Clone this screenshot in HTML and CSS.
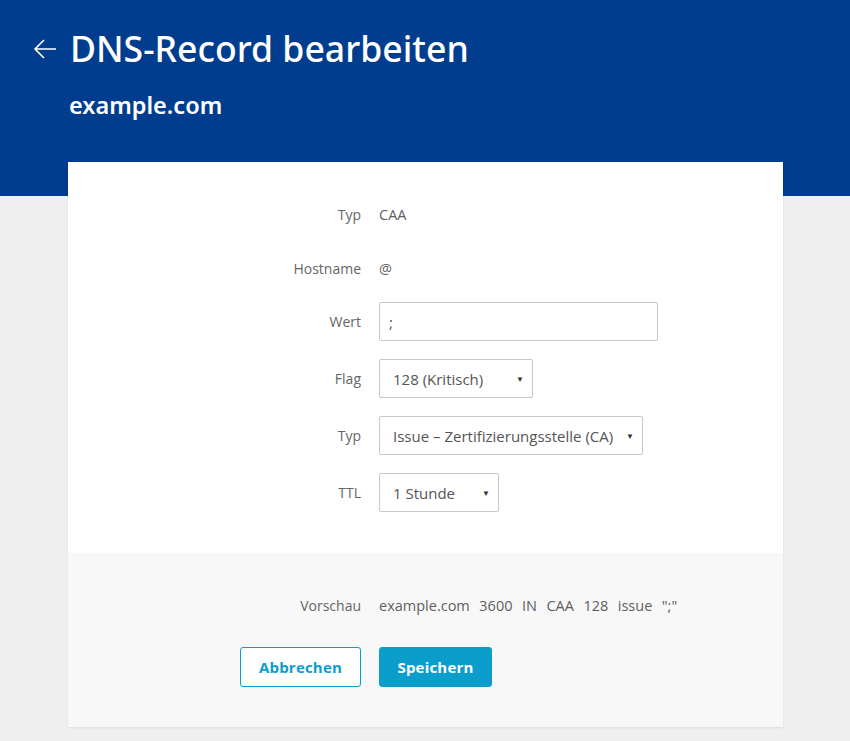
FILE: index.html
```html
<!DOCTYPE html>
<html lang="de">
<head>
<meta charset="utf-8">
<title>DNS-Record bearbeiten</title>
<link rel="stylesheet" href="styles.css">
</head>
<body>
<header class="header">
  <div class="title-row">
    <svg class="back" width="24" height="24" viewBox="0 0 24 24" aria-hidden="true">
      <path d="M23 12H2M11 3l-9 9 9 9" fill="none" stroke="#fff" stroke-width="1.6"/>
    </svg>
    <h1 class="title">DNS-Record bearbeiten</h1>
  </div>
  <div class="subtitle">example.com</div>
</header>
<main class="card">
  <section class="form">
    <div class="row text-row"><span class="label">Typ</span><span class="value">CAA</span></div>
    <div class="row text-row"><span class="label">Hostname</span><span class="value">@</span></div>
    <div class="row ctrl-row"><span class="label">Wert</span><div class="input">;</div></div>
    <div class="row ctrl-row"><span class="label">Flag</span><div class="select w-flag"><span>128 (Kritisch)</span><span class="caret">▼</span></div></div>
    <div class="row ctrl-row"><span class="label">Typ</span><div class="select w-typ"><span>Issue – Zertifizierungsstelle (CA)</span><span class="caret">▼</span></div></div>
    <div class="row ctrl-row"><span class="label">TTL</span><div class="select w-ttl"><span>1 Stunde</span><span class="caret">▼</span></div></div>
  </section>
  <section class="footer">
    <div class="row preview"><span class="label">Vorschau</span><span class="value tokens"><span>example.com</span><span>3600</span><span>IN</span><span>CAA</span><span>128</span><span>issue</span><span>";"</span></span></div>
    <div class="row buttons">
      <div class="label-cell"><button class="btn btn-outline">Abbrechen</button></div>
      <button class="btn btn-primary">Speichern</button>
    </div>
  </section>
</main>
</body>
</html>
```
FILE: styles.css
```css
* { box-sizing: border-box; }
html, body { margin: 0; padding: 0; }
body {
  background: #efefef;
  font-family: "Open Sans", "Noto Sans", sans-serif;
  font-size: 14px;
  color: #5b5b5b;
  height: 741px;
  overflow: hidden;
}
.header {
  background: #003d8f;
  height: 196px;
  padding: 26px 0 0 33px;
  color: #fff;
}
.title-row {
  display: flex;
  align-items: center;
  gap: 13px;
}
.back { display: block; margin-top: 2px; }
.title {
  margin: 0;
  font-family: "Noto Sans", sans-serif;
  font-weight: 500;
  font-size: 35.6px;
  line-height: 44px;
  letter-spacing: 0;
}
.subtitle {
  margin: 20px 0 0 36px;
  font-family: "Noto Sans", sans-serif;
  font-weight: 600;
  font-size: 23.5px;
  line-height: 30px;
}
.card {
  width: 715px;
  margin: -34px 0 0 68px;
  background: #fff;
  box-shadow: 0 1px 2px rgba(0,0,0,0.08);
}
.form {
  padding: 32px 0 41px;
  display: flex;
  flex-direction: column;
}
.row {
  display: flex;
  align-items: center;
}
.text-row { height: 40px; margin-bottom: 14px; }
.ctrl-row { height: 39px; margin-bottom: 18px; }
.ctrl-row:last-child { margin-bottom: 0; }
.label {
  width: 293px;
  text-align: right;
  margin-right: 18px;
  color: #666;
}
.value { color: #5f5f5f; font-size: 14.5px; }
.input, .select {
  height: 39px;
  border: 1px solid #c8c8c8;
  border-radius: 2px;
  background: #fff;
  display: flex;
  align-items: center;
  color: #555;
  font-size: 15px;
}
.input { width: 279px; padding-left: 9px; }
.select { padding-left: 13px; padding-right: 8px; justify-content: space-between; }
.w-flag { width: 154px; }
.w-typ { width: 264px; }
.w-ttl { width: 120px; }
.caret { font-size: 8px; color: #333; }
.footer {
  background: #f8f8f8;
  padding: 41px 0 40px;
}
.preview { height: 22px; }
.tokens { display: inline-flex; gap: 9.5px; font-size: 14.5px; }
.buttons { margin-top: 31px; }
.label-cell {
  width: 293px;
  margin-right: 18px;
  display: flex;
  justify-content: flex-end;
}
.btn {
  height: 40px;
  border-radius: 3px;
  font-family: "Open Sans", sans-serif;
  font-weight: 700;
  font-size: 15px;
  letter-spacing: 0.2px;
  cursor: pointer;
}
.btn-outline {
  width: 121px;
  background: #fff;
  border: 1px solid #0b9dcc;
  color: #0b9dcc;
}
.btn-primary {
  width: 113px;
  background: #0b9dcc;
  border: 1px solid #0b9dcc;
  color: #fff;
}
```
